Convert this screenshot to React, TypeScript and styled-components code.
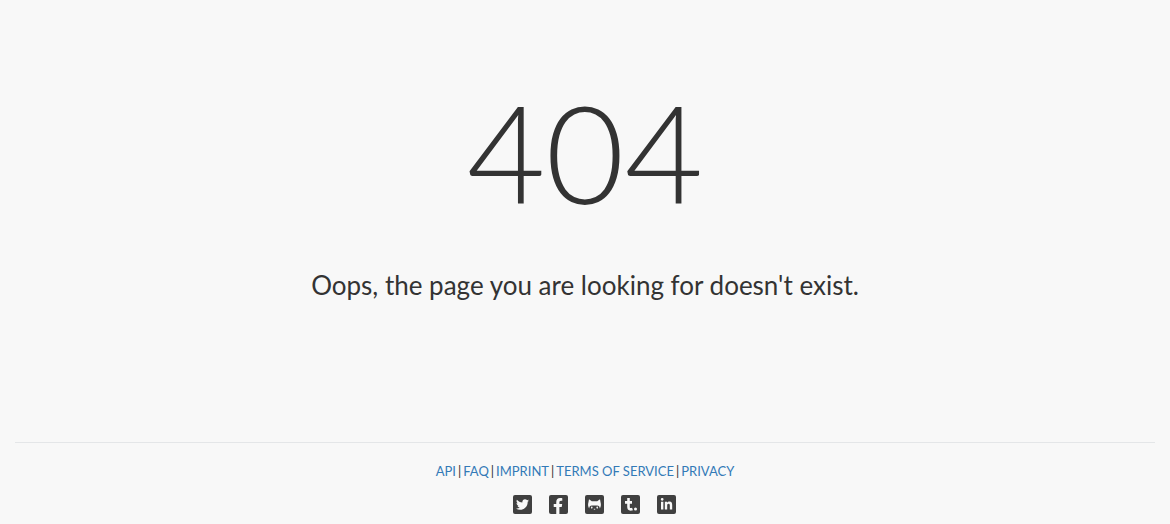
import React from 'react';
import styled, { createGlobalStyle } from 'styled-components';
import { FaTwitter, FaFacebookF, FaLinkedinIn } from 'react-icons/fa';

const GlobalStyle = createGlobalStyle`
  *, *::before, *::after { box-sizing: border-box; }
  body {
    margin: 0;
    background: #f8f8f8;
    color: #333;
    font-family: Lato, "Liberation Sans", sans-serif;
  }
`;

const Page = styled.div`
  display: flex;
  flex-direction: column;
  padding: 0 15px;
  text-align: center;
`;

const Main = styled.main`
  padding: 69px 0 130px;
`;

const Code = styled.h1`
  margin: 0;
  font-size: 136px;
  font-weight: 300;
  line-height: 166px;
`;

const Message = styled.p`
  margin: 23px 0 0;
  font-size: 26px;
  font-weight: 400;
  line-height: 54px;
`;

const Footer = styled.footer`
  display: flex;
  flex-direction: column;
  align-items: center;
  gap: 14px;
  padding: 18px 0 10px;
  border-top: 1px solid #e4e6e8;
`;

const FooterNav = styled.nav`
  display: flex;
  gap: 2px;
  font-size: 13px;
  line-height: 20px;
`;

const FooterLink = styled.a`
  color: #337ab7;
  text-decoration: none;
  &:hover { text-decoration: underline; }
`;

const SocialList = styled.ul`
  display: flex;
  gap: 17px;
  margin: 0;
  padding: 0 0 0 18px;
  list-style: none;
`;

const SocialLink = styled.a<{ $align?: string }>`
  display: flex;
  align-items: ${(p) => p.$align ?? 'center'};
  justify-content: center;
  width: 19px;
  height: 19px;
  border-radius: 2px;
  background: #404040;
  color: #f8f8f8;
`;

const CatIcon = () => (
  <svg width="19" height="19" viewBox="0 0 19 19" aria-hidden="true">
    <path
      fill="#f8f8f8"
      d="M4 4.2 6.8 6.2h5.4L15 4.2l.6 3.4c.6 2 .4 4.2-.8 5.8-.2-1.8-1-2.8-2.6-2.8H6.8c-1.6 0-2.4 1-2.6 2.8C3 11.800 2.800 9.600 3.400 7.600z"
    />
    <ellipse cx="6.800" cy="12.600" rx=".8" ry="1.100" fill="#f8f8f8" />
    <ellipse cx="12.200" cy="12.600" rx=".8" ry="1.100" fill="#f8f8f8" />
    <path fill="#f8f8f8" d="M8.800 13.800h1.400v.8H8.800z" />
  </svg>
);

const TumblrIcon = () => (
  <svg width="19" height="19" viewBox="0 0 19 19" aria-hidden="true">
    <path
      d="M7.500 3v9c0 2.200 1.600 2.900 4 2M4 7.400h7"
      fill="none"
      stroke="#f8f8f8"
      strokeWidth="2.600"
    />
    <circle cx="14.500" cy="14" r="1.500" fill="#f8f8f8" />
  </svg>
);

const pages = ['API', 'FAQ', 'IMPRINT', 'TERMS OF SERVICE', 'PRIVACY'];

const socials = [
  { name: 'Twitter', icon: <FaTwitter size={13} /> },
  { name: 'Facebook', icon: <FaFacebookF size={16} />, align: 'flex-end' },
  { name: 'GitHub', icon: <CatIcon /> },
  { name: 'Tumblr', icon: <TumblrIcon /> },
  { name: 'LinkedIn', icon: <FaLinkedinIn size={13} /> },
];

export default function App() {
  return (
    <>
      <GlobalStyle />
      <Page>
        <Main>
          <Code>404</Code>
          <Message>Oops, the page you are looking for doesn't exist.</Message>
        </Main>
        <Footer>
          <FooterNav aria-label="Footer">
            {pages.map((label, i) => (
              <React.Fragment key={label}>
                {i > 0 && <span>|</span>}
                <FooterLink href="#">{label}</FooterLink>
              </React.Fragment>
            ))}
          </FooterNav>
          <SocialList>
            {socials.map((s) => (
              <li key={s.name}>
                <SocialLink href="#" aria-label={s.name} $align={s.align}>
                  {s.icon}
                </SocialLink>
              </li>
            ))}
          </SocialList>
        </Footer>
      </Page>
    </>
  );
}
